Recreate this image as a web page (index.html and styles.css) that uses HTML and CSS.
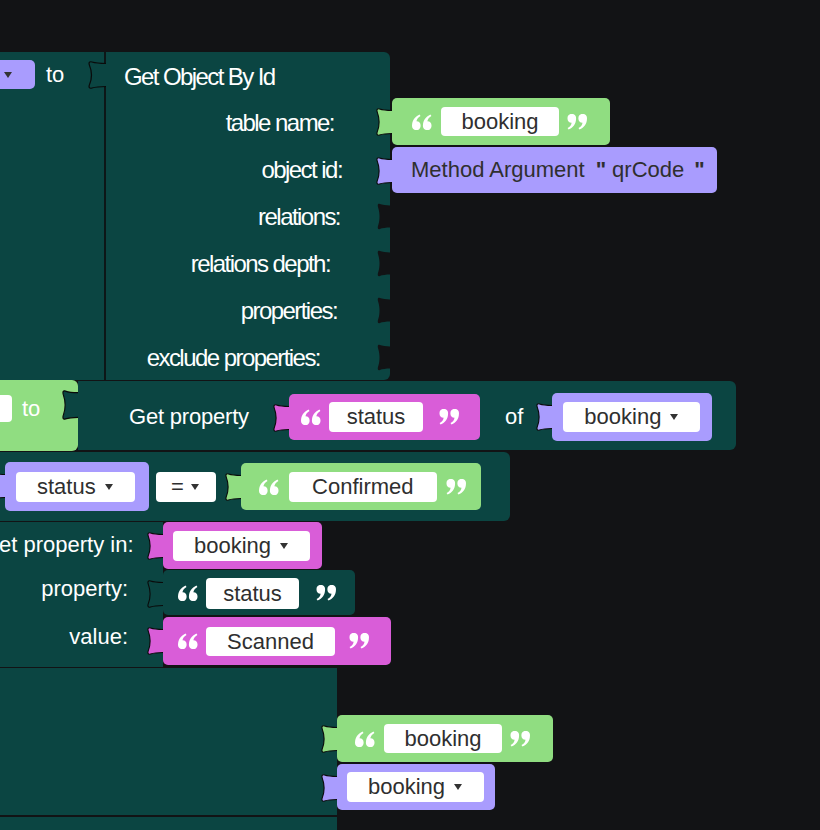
FILE: index.html
```html
<!DOCTYPE html>
<html lang="en">
<head>
<meta charset="utf-8">
<title>Blocks</title>
<link rel="stylesheet" href="styles.css">
</head>
<body>
<div class="canvas">
  <svg class="defs" width="0" height="0" aria-hidden="true">
    <defs>
      <path id="tabp" d="M17 2.5 C12 2.5 6.5 2 3.5 1 C1 0.2 0.4 2 1.4 4.6 C2.7 8 3.1 11 3.1 14 C3.1 17 2.7 20 1.4 23.4 C0.4 26 1 27.8 3.5 27 C6.5 26 12 25.5 17 25.5"/>
      <path id="qm" d="M8.6 11.6 A4.3 4.3 0 1 1 0.05 11.3 C0.05 6.6 2.7 2.6 7.6 0.4 L8.5 1.9 C5.9 3.4 4.7 5.3 4.5 7.3 A4.3 4.3 0 0 1 8.6 11.6 Z"/>
      <g id="qo"><use href="#qm"/><use href="#qm" x="10.9"/></g>
    </defs>
  </svg>

  <div class="stack">
    <!-- row 1 -->
    <div class="row">
      <div class="blk teal blk-a">
        <div class="pill"><span class="caret"></span></div>
        <span class="to">to</span>
      </div>
      <div class="blk teal getobj">
        <svg class="tab tab-go tab-t" viewBox="0 0 16 28" preserveAspectRatio="none"><use href="#tabp"/></svg>
        <div class="go-title">Get Object By Id</div>
        <div class="go-row go-r1">table name:</div>
        <div class="go-row go-r2">object id:</div>
        <div class="go-row go-r3">relations:<svg class="notch" viewBox="0 0 16 28" preserveAspectRatio="none"><use href="#tabp"/></svg></div>
        <div class="go-row go-r4">relations depth:<svg class="notch" viewBox="0 0 16 28" preserveAspectRatio="none"><use href="#tabp"/></svg></div>
        <div class="go-row go-r5">properties:<svg class="notch" viewBox="0 0 16 28" preserveAspectRatio="none"><use href="#tabp"/></svg></div>
        <div class="go-row go-r6">exclude properties:<svg class="notch" viewBox="0 0 16 28" preserveAspectRatio="none"><use href="#tabp"/></svg></div>
      </div>
      <div class="inputs in-r1">
        <div class="blk green str s1">
          <svg class="tab tab-g" viewBox="0 0 16 28" preserveAspectRatio="none"><use href="#tabp"/></svg>
          <svg class="q" viewBox="0 0 20 16"><use href="#qo"/></svg>
          <span class="fld">booking</span>
          <svg class="q" viewBox="0 0 20 16"><use href="#qo" transform="rotate(180 10 8)"/></svg>
        </div>
        <div class="blk purple ma">
          <svg class="tab tab-p" viewBox="0 0 16 28" preserveAspectRatio="none"><use href="#tabp"/></svg>
          <span>Method Argument</span>
          <span class="dq dq1">"</span>
          <span class="qr">qrCode</span>
          <span class="dq dq2">"</span>
        </div>
      </div>
    </div>

    <!-- row 2 -->
    <div class="row">
      <div class="blk green blk-set">
        <span class="stub"></span>
        <span class="to">to</span>
      </div>
      <div class="blk teal getprop">
        <svg class="tab tab-gp tab-t" viewBox="0 0 16 28" preserveAspectRatio="none"><use href="#tabp"/></svg>
        <span class="gp-label">Get property</span>
        <div class="blk magenta str s2">
          <svg class="tab tab-m" viewBox="0 0 16 28" preserveAspectRatio="none"><use href="#tabp"/></svg>
          <svg class="q" viewBox="0 0 20 16"><use href="#qo"/></svg>
          <span class="fld">status</span>
          <svg class="q" viewBox="0 0 20 16"><use href="#qo" transform="rotate(180 10 8)"/></svg>
        </div>
        <span class="of">of</span>
        <div class="blk purple vb vb-of">
          <svg class="tab tab-p" viewBox="0 0 16 28" preserveAspectRatio="none"><use href="#tabp"/></svg>
          <span class="dd">booking<span class="caret"></span></span>
        </div>
      </div>
    </div>

    <!-- row 3 -->
    <div class="row">
      <div class="blk teal blk-cmp">
        <div class="blk purple vb vb-status">
          <svg class="tab tab-p" viewBox="0 0 16 28" preserveAspectRatio="none"><use href="#tabp"/></svg>
          <span class="dd">status<span class="caret"></span></span>
        </div>
        <span class="dd eq">=<span class="caret"></span></span>
        <div class="blk green str s3">
          <svg class="tab tab-g" viewBox="0 0 16 28" preserveAspectRatio="none"><use href="#tabp"/></svg>
          <svg class="q" viewBox="0 0 20 16"><use href="#qo"/></svg>
          <span class="fld">Confirmed</span>
          <svg class="q" viewBox="0 0 20 16"><use href="#qo" transform="rotate(180 10 8)"/></svg>
        </div>
      </div>
    </div>

    <!-- row 4 -->
    <div class="row r4">
      <div class="blk teal blk-setp">
        <div class="sp-row">set property in:</div>
        <div class="sp-row">property:</div>
        <div class="sp-row">value:</div>
      </div>
      <div class="inputs in-r4">
        <div class="blk magenta vb vb-in">
          <svg class="tab tab-m" viewBox="0 0 16 28" preserveAspectRatio="none"><use href="#tabp"/></svg>
          <span class="dd">booking<span class="caret"></span></span>
        </div>
        <div class="blk teal str s4">
          <svg class="tab tab-t" viewBox="0 0 16 28" preserveAspectRatio="none"><use href="#tabp"/></svg>
          <svg class="q" viewBox="0 0 20 16"><use href="#qo"/></svg>
          <span class="fld">status</span>
          <svg class="q" viewBox="0 0 20 16"><use href="#qo" transform="rotate(180 10 8)"/></svg>
        </div>
        <div class="blk magenta str s5">
          <svg class="tab tab-m" viewBox="0 0 16 28" preserveAspectRatio="none"><use href="#tabp"/></svg>
          <svg class="q" viewBox="0 0 20 16"><use href="#qo"/></svg>
          <span class="fld">Scanned</span>
          <svg class="q" viewBox="0 0 20 16"><use href="#qo" transform="rotate(180 10 8)"/></svg>
        </div>
      </div>
    </div>

    <!-- row 5 -->
    <div class="row r5">
      <div class="blk teal blk-ret"></div>
      <div class="inputs in-r5">
        <div class="blk green str s6">
          <svg class="tab tab-g" viewBox="0 0 16 28" preserveAspectRatio="none"><use href="#tabp"/></svg>
          <svg class="q" viewBox="0 0 20 16"><use href="#qo"/></svg>
          <span class="fld">booking</span>
          <svg class="q" viewBox="0 0 20 16"><use href="#qo" transform="rotate(180 10 8)"/></svg>
        </div>
        <div class="blk purple vb vb-k">
          <svg class="tab tab-p" viewBox="0 0 16 28" preserveAspectRatio="none"><use href="#tabp"/></svg>
          <span class="dd">booking<span class="caret"></span></span>
        </div>
      </div>
    </div>

    <!-- row 6 -->
    <div class="row r6">
      <div class="blk teal blk-tail"></div>
    </div>
  </div>
</div>
</body>
</html>
```

FILE: styles.css
```css
html, body {
  margin: 0;
  padding: 0;
  background: #121315;
}

.canvas {
  position: relative;
  width: 820px;
  height: 830px;
  overflow: hidden;
  background: #121315;
  font-family: "Liberation Sans", Arial, sans-serif;
  font-size: 22px;
  color: #fff;
}

.defs {
  position: absolute;
  width: 0;
  height: 0;
}

.stack {
  position: absolute;
  left: -12px;
  top: 52px;
  display: flex;
  flex-direction: column;
}

.row {
  display: flex;
  align-items: flex-start;
  flex: none;
}

.blk {
  position: relative;
  box-sizing: border-box;
  flex: none;
  white-space: nowrap;
}

.teal { background: #0b4542; }
.green { background: #90dd81; }
.purple { background: #a99cfe; }
.magenta { background: #d95dd8; }

/* puzzle tabs */
.tab {
  position: absolute;
  left: -16px;
  top: 10px;
  width: 16px;
  height: 28px;
  stroke: #0a0a0a;
  stroke-width: 1.1;
  overflow: hidden;
}
.tab-g { fill: #90dd81; }
.tab-p { fill: #a99cfe; }
.tab-m { fill: #d95dd8; }
.tab-t { fill: #0b4542; }
.tab-go { left: -18px; width: 18px; top: 9px; }
.tab-gp { top: 9px; height: 30px; }

.notch {
  position: absolute;
  right: 0;
  top: 10px;
  width: 13px;
  height: 27px;
  fill: #121315;
  overflow: hidden;
}

/* quotes */
.q {
  width: 20px;
  height: 16px;
  flex: none;
  fill: #fff;
}

/* fields */
.fld {
  display: block;
  flex: none;
  height: 29px;
  line-height: 29px;
  background: #fff;
  border-radius: 4px;
  color: #2f2f2f;
  text-align: center;
}

.dd {
  display: flex;
  align-items: center;
  flex: none;
  gap: 9px;
  height: 30px;
  padding: 0 22px 0 21px;
  background: #fff;
  border-radius: 4px;
  color: #2f2f2f;
}

.caret {
  display: block;
  width: 0;
  height: 0;
  border-left: 4.5px solid transparent;
  border-right: 4.5px solid transparent;
  border-top: 6px solid #333;
}

/* row 1 */
.blk-a {
  width: 116px;
  height: 328px;
  display: flex;
  align-items: flex-start;
  padding-top: 8px;
}
.pill {
  box-sizing: border-box;
  width: 47px;
  height: 29px;
  padding-left: 16px;
  display: flex;
  align-items: center;
  background: #a99cfe;
  border-radius: 0 5px 5px 0;
}
.to {
  line-height: 29px;
}
.blk-a .to { margin-left: 11px; }

.getobj {
  width: 286px;
  height: 328px;
  padding-top: 2px;
  border-left: 2px solid #0d1617;
  border-radius: 0 6px 6px 0;
}
.go-title {
  height: 45px;
  line-height: 45px;
  padding-left: 18px;
  font-size: 24px;
  letter-spacing: -1.6px;
}
.go-row {
  position: relative;
  height: 47px;
  line-height: 47px;
  text-align: right;
  font-size: 24px;
  letter-spacing: -1.55px;
}
.go-r1 { padding-right: 56px; }
.go-r2 { padding-right: 48px; }
.go-r3 { padding-right: 50px; }
.go-r4 { padding-right: 60px; }
.go-r5 { padding-right: 53px; }
.go-r6 { padding-right: 70px; }

.inputs {
  display: flex;
  flex-direction: column;
  flex: none;
}
.in-r1 {
  margin-left: 2px;
  padding-top: 46px;
  gap: 2px;
}

.str {
  display: flex;
  align-items: center;
  height: 47px;
  border-radius: 5px;
}

.s1 { width: 218px; padding-left: 20px; }
.s1 .fld { width: 118px; margin: 0 8px 0 9px; }

.ma {
  width: 325px;
  height: 46px;
  padding-left: 19px;
  display: flex;
  align-items: center;
  border-radius: 5px;
  color: #2f2f2f;
}
.dq { font-weight: bold; }
.dq1 { margin-left: 11px; }
.qr { margin-left: 6px; }
.dq2 { margin-left: 10px; }

/* row 2 */
.blk-set {
  width: 90px;
  height: 71px;
  padding-top: 15px;
  display: flex;
  align-items: flex-start;
  border-radius: 0 6px 6px 0;
}
.stub {
  display: block;
  width: 24px;
  height: 27px;
  background: #fff;
  border-radius: 0 4px 4px 0;
}
.blk-set .to { margin-left: 10px; line-height: 27px; }

.getprop {
  width: 658px;
  height: 69px;
  margin-top: 1px;
  padding-left: 51px;
  padding-top: 2px;
  display: flex;
  align-items: center;
  border-radius: 0 6px 6px 0;
}
.gp-label {
  flex: none;
  width: 160px;
  letter-spacing: -0.2px;
}
.s2 { width: 191px; height: 46px; padding-left: 12px; }
.s2 .fld { width: 94px; height: 30px; line-height: 30px; margin: 0 16px 0 8px; }
.of { margin: 0 29px 0 25px; }

.vb {
  display: flex;
  align-items: center;
  border-radius: 5px;
  padding-left: 10px;
}
.vb-of { width: 160px; height: 48px; padding-left: 11px; }

/* row 3 */
.blk-cmp {
  width: 522px;
  height: 69px;
  margin-top: 1px;
  padding-left: 17px;
  display: flex;
  align-items: center;
  border-radius: 0 6px 6px 0;
}
.vb-status { width: 144px; height: 49px; padding-left: 11px; }
.eq {
  margin-left: 7px;
  gap: 7px;
  padding: 0 17px 0 15px;
}
.s3 { width: 240px; margin-left: 25px; padding-left: 18px; }
.s3 .fld { width: 148px; height: 30px; line-height: 30px; margin: 0 9px 0 10px; }

/* row 4 */
.r4 { margin-top: 1px; }
.blk-setp {
  width: 175px;
  height: 145px;
}
.sp-row {
  height: 46px;
  line-height: 46px;
  text-align: right;
  padding-right: 35px;
}
.sp-row:nth-child(2) { line-height: 42px; }
.vb-in { width: 159px; height: 47px; }
.s4 { width: 192px; height: 45px; margin-top: 1px; padding-left: 15px; }
.s4 .fld { width: 93px; height: 31px; line-height: 31px; margin: 2px 17px 0 8px; }
.s5 { width: 228px; height: 48px; margin-top: 2px; padding-left: 15px; }
.s5 .fld { width: 129px; margin: 0 14px 0 8px; }

/* row 5 */
.r5 { margin-top: 1px; }
.blk-ret {
  width: 349px;
  height: 147px;
}
.in-r5 {
  padding-top: 47px;
  gap: 2px;
}
.s6 { width: 216px; padding-left: 18px; }
.s6 .fld { width: 118px; margin: 0 8px 0 9px; }
.vb-k { width: 158px; height: 46px; }

/* row 6 */
.r6 { margin-top: 2px; }
.blk-tail {
  width: 349px;
  height: 40px;
}
```
